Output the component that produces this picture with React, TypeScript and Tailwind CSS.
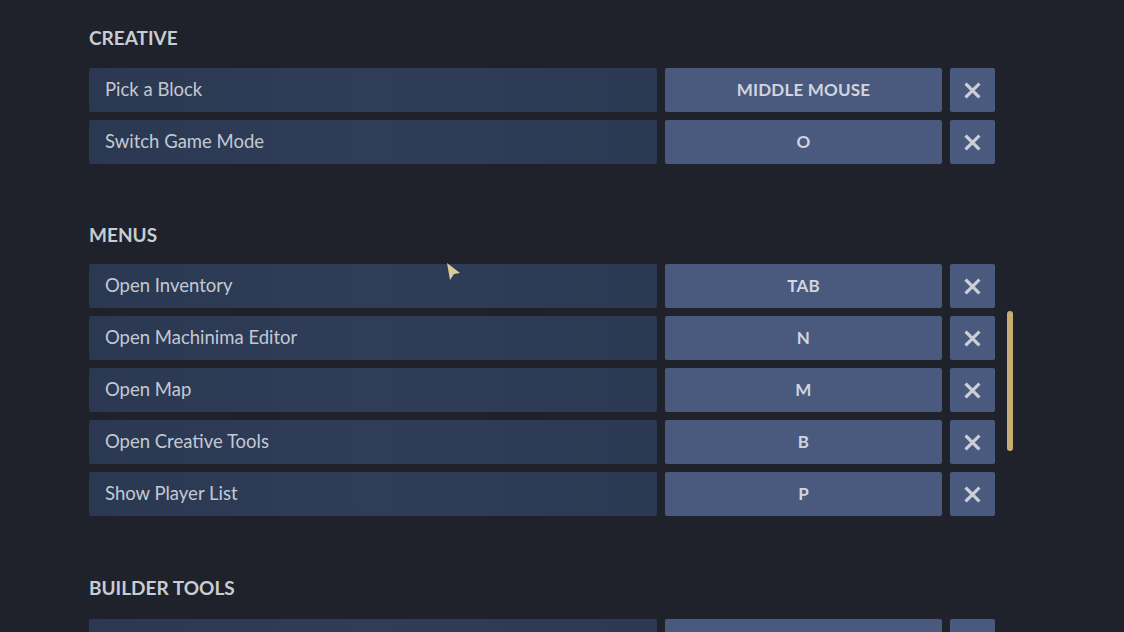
import React from 'react';

type Binding = { action: string; key: string };

const sections: { title: string; bindings: Binding[]; top: string; gap: string }[] = [
  {
    title: 'Creative',
    top: '',
    gap: 'mt-[18px]',
    bindings: [
      { action: 'Pick a Block', key: 'Middle Mouse' },
      { action: 'Switch Game Mode', key: 'O' },
    ],
  },
  {
    title: 'Menus',
    top: 'mt-[59px]',
    gap: 'mt-[17px]',
    bindings: [
      { action: 'Open Inventory', key: 'Tab' },
      { action: 'Open Machinima Editor', key: 'N' },
      { action: 'Open Map', key: 'M' },
      { action: 'Open Creative Tools', key: 'B' },
      { action: 'Show Player List', key: 'P' },
    ],
  },
  {
    title: 'Builder Tools',
    top: 'mt-[60px]',
    gap: 'mt-[19px]',
    bindings: [{ action: 'Toggle Builder Tools Legend', key: '\\' }],
  },
];

function ClearIcon() {
  return (
    <svg width="17" height="17" viewBox="0 0 16 16" className="text-[#c9ced8]">
      <path d="M2.5 2.5 L13.5 13.5 M13.5 2.5 L2.5 13.5" stroke="currentColor" strokeWidth="3" strokeLinecap="square" />
    </svg>
  );
}

function BindingRow({ binding }: { binding: Binding }) {
  return (
    <div className="flex h-11 gap-2">
      <div className="flex w-[568px] items-center rounded-[2px] bg-gradient-to-r from-[#2b3851] via-[#2f3d59] to-[#2c3953] pl-4 text-[18.5px] text-[#c3c9d4]">
        {binding.action}
      </div>
      <div className="flex w-[277px] items-center justify-center rounded-[2px] bg-[#4a5a7f] text-[17px] font-bold uppercase tracking-[0.2px] text-[#d0d5de]">
        {binding.key}
      </div>
      <div className="flex w-[45px] items-center justify-center rounded-[2px] bg-[#4a5a7f]">
        <ClearIcon />
      </div>
    </div>
  );
}

export default function App() {
  return (
    <div
      className="relative h-[632px] w-[1124px] overflow-hidden bg-[#1f222b]"
      style={{ fontFamily: 'Lato, "Open Sans", sans-serif' }}
    >
      <div className="flex flex-col pl-[89px] pt-[26px]">
        {sections.map((section) => (
          <div key={section.title} className={section.top}>
            <h2 className="h-6 text-[19px] font-bold uppercase leading-6 text-[#c8ccd3]">{section.title}</h2>
            <div className={`${section.gap} flex flex-col gap-2`}>
              {section.bindings.map((b) => (
                <BindingRow key={b.action} binding={b} />
              ))}
            </div>
          </div>
        ))}
      </div>

      {/* scrollbar thumb */}
      <div className="absolute left-[1007px] top-[311px] h-[140px] w-[6px] rounded-full bg-[#c8ad72]" />

      {/* mouse cursor */}
      <svg className="absolute left-[446px] top-[262px]" width="16" height="20" viewBox="0 0 16 20">
        <path d="M1 1 L14 11 L8 12 L4 18 Z" fill="#d9cc98" />
      </svg>
    </div>
  );
}
